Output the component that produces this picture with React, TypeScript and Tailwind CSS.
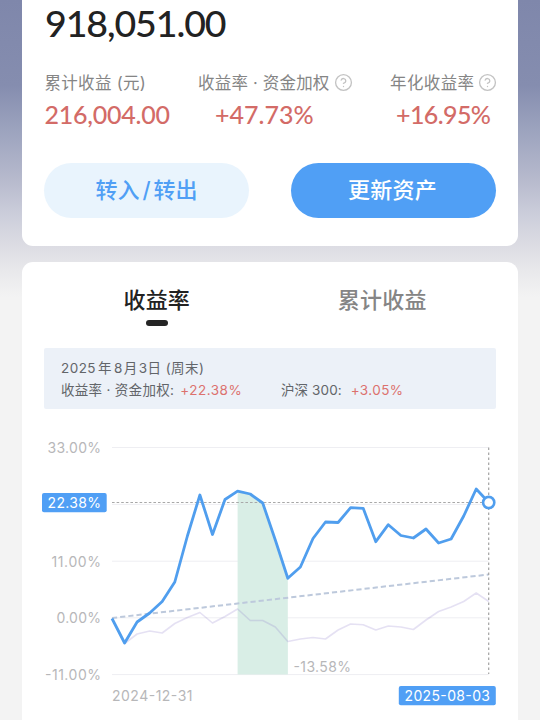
import { CircleHelp } from 'lucide-react';

const START_X = 112;
const STEP = 12.56;

const accountLine = [
  618.5, 643, 622, 613, 601.5, 582, 536, 495, 534.5, 499.5, 491.2, 494, 503, 540, 578.3, 567,
  538.5, 522, 522.5, 507.7, 508.3, 541.7, 524.7, 535.5, 538, 529, 543, 539, 516, 489, 502.5,
];

const indexLine = [
  618.5, 643.5, 634, 631, 633, 623.5, 617.5, 612.5, 623, 616.5, 609, 620.5, 620.5, 627, 641.5, 639,
  637.5, 639, 630, 624, 624.7, 630, 626, 627, 629.5, 620, 611.5, 607, 601.5, 593, 601.5,
];

const gridLines = [447.5, 504.4, 561.2, 617.8, 674.6];

const toPoints = (values: number[], from = 0) =>
  values.map((y, i) => `${(START_X + (i + from) * STEP).toFixed(1)},${y}`).join(' ');

function Chart() {
  const drawdown = toPoints(accountLine.slice(10, 15), 10);

  return (
    <svg
      viewBox="22 430 496 290"
      className="block h-[290px] w-[496px] font-['Inter',sans-serif] text-[14px]"
    >
      {gridLines.map((y) => (
        <line key={y} x1="112" x2="488.7" y1={y} y2={y} stroke="#eeeef2" strokeWidth="1" />
      ))}

      <polygon points={`237.6,674.6 ${drawdown} 287.9,674.6`} fill="#d9eee6" />
      <polyline points={toPoints(indexLine)} fill="none" stroke="#8878c8" strokeOpacity="0.22" strokeWidth="1.6" strokeLinejoin="round" />
      <line x1="112" y1="618" x2="488.7" y2="574.5" stroke="#bdc9dc" strokeWidth="2" strokeDasharray="5.2 3" />

      {/* Selected point guides */}
      <line x1="112" x2="488.7" y1="502.5" y2="502.5" stroke="#a8a8a8" strokeWidth="1" strokeDasharray="2.6 2" />
      <line x1="488.7" x2="488.7" y1="447.5" y2="674" stroke="#a2a2a2" strokeWidth="1.2" strokeDasharray="2.6 2.4" />
      <polyline points={toPoints(accountLine)} fill="none" stroke="#509eee" strokeWidth="2.8" strokeLinejoin="round" />
      <circle cx="488.7" cy="502.5" r="5.6" fill="#fff" stroke="#509eee" strokeWidth="2.6" />

      <g fill="#b7b7b9">
        <text x="47.5" y="453" textLength="53.5">33.00%</text>
        <text x="51.5" y="566.5" textLength="49.5">11.00%</text>
        <text x="56.5" y="623.3" textLength="44.5">0.00%</text>
        <text x="45" y="680" textLength="56">-11.00%</text>
        <text x="112" y="700.7" textLength="80.5">2024-12-31</text>
        <text x="293.5" y="671.7" textLength="57.5">-13.58%</text>
      </g>

      <rect x="42" y="493" width="64.7" height="19.3" rx="2" fill="#509ff5" />
      <text x="47.5" y="507.9" textLength="53.5" fill="#fff">22.38%</text>
      <rect x="398.8" y="686" width="97" height="19.2" rx="2" fill="#509ff5" />
      <text x="404.5" y="700.7" textLength="85.5" fill="#fff">2025-08-03</text>
    </svg>
  );
}

function HelpIcon() {
  return <CircleHelp className="-mt-[2px] h-[19px] w-[19px] text-[#c3c3c3]" strokeWidth={1.7} />;
}

export default function App() {
  return (
    <div className="h-[720px] w-[540px] overflow-hidden bg-[linear-gradient(180deg,#7f87ab_0px,#858daf_85px,#9ca3be_130px,#b7bacd_180px,#cccedb_215px,#dcdce3_245px,#e8e8eb_270px,#f3f3f3_297px)] px-[22px] font-['Inter','Noto_Sans_CJK_SC',sans-serif]">
      {/* Asset summary */}
      <section className="h-[245.5px] rounded-b-[11px] bg-white px-[22px]">
        <div className="h-[70px] pl-px font-['Lato',sans-serif] text-[37.5px] leading-[45px] font-medium tracking-[-1.1px] text-[#222]">
          918,051.00
        </div>

        <div className="flex h-[93px]">
          <div className="w-[126px] pl-[0.5px]">
            <div className="h-[25px] pt-px text-[16.5px] leading-[25px] tracking-[0.3px] whitespace-nowrap text-[#858585]">累计收益 (元)</div>
            <div className="pt-[3px] font-['Lato',sans-serif] text-[25px] leading-[32px] font-medium tracking-[-0.25px] whitespace-nowrap text-[#d36b67]">216,004.00</div>
          </div>
          <div className="ml-[28px] w-[154.5px]">
            <div className="flex h-[25px] items-center justify-between pt-px text-[16.5px] leading-[25px] tracking-[0.2px] whitespace-nowrap text-[#858585]">
              收益率 · 资金加权 <HelpIcon />
            </div>
            <div className="pt-[3px] pl-[17px] font-['Lato',sans-serif] text-[25px] leading-[32px] font-medium whitespace-nowrap text-[#d36b67]">+47.73%</div>
          </div>
          <div className="mr-[-1px] ml-auto w-[107px]">
            <div className="flex h-[25px] items-center justify-between pt-px text-[16.5px] leading-[25px] tracking-[0.4px] whitespace-nowrap text-[#858585]">
              年化收益率 <HelpIcon />
            </div>
            <div className="pt-[3px] pl-[6px] font-['Lato',sans-serif] text-[25px] leading-[32px] font-medium tracking-[-0.6px] whitespace-nowrap text-[#d36b67]">+16.95%</div>
          </div>
        </div>

        <div className="flex justify-between text-[22px] font-medium">
          <button className="h-[55px] w-[205px] rounded-full bg-[#e9f4fd] text-[#509ff5]">转入<span className="mx-[3px]">/</span>转出</button>
          <button className="h-[55px] w-[205px] rounded-full bg-[#509ff5] pr-[2px] tracking-[0.3px] text-white">更新资产</button>
        </div>
      </section>

      {/* Yield chart */}
      <section className="mt-[16.5px] h-[458px] rounded-t-[11px] bg-white">
        <div className="flex h-[86px] px-[22px] pt-[22px] text-[22px] leading-[32px] font-medium tracking-[0.2px]">
          <div className="flex flex-1 flex-col items-center">
            <span className="text-[#222]">收益率</span>
            <span className="mt-[4px] h-[5.5px] w-[22px] rounded-full bg-[#252525]" />
          </div>
          <div className="flex-1 pr-px text-center text-[#858585]">累计收益</div>
        </div>

        <div className="mx-[22px] h-[61px] rounded-[2px] bg-[#ecf1f8] px-[17px] pt-[9px] text-[13.5px] leading-[22px] text-[#626569]">
          <div className="tracking-[0.45px]">2025<span className="mx-[2px]">年</span>8<span className="mx-[1px]">月</span>3日 (周末)</div>
          <div className="flex">
            <div className="w-[220px] tracking-[0.3px]">收益率 · 资金加权: <span className="ml-[2px] tracking-[0.5px] text-[#dc716e]">+22.38%</span></div>
            <div className="tracking-[0.1px]">沪深 300: <span className="ml-[5px] tracking-[0.4px] text-[#dc716e]">+3.05%</span></div>
          </div>
        </div>

        <div className="mt-[21px]">
          <Chart />
        </div>
      </section>
    </div>
  );
}
